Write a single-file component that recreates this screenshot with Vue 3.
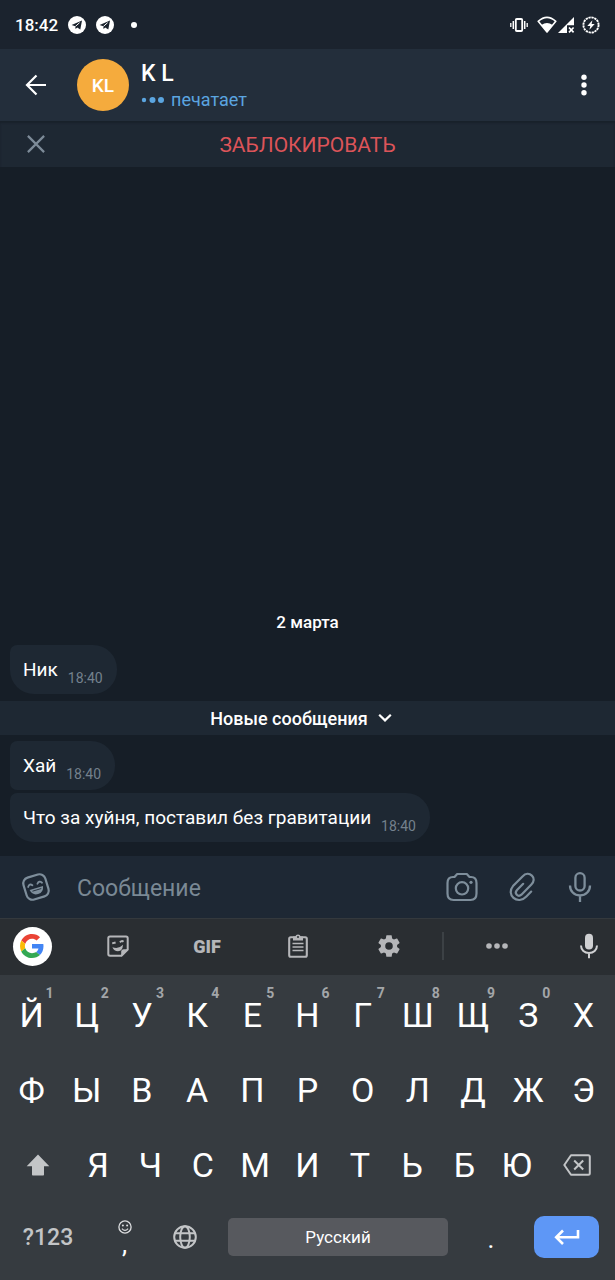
<script setup>
import { ref } from 'vue'

const draft = ref('')
const topRow = [
  ['Й', '1'], ['Ц', '2'], ['У', '3'], ['К', '4'], ['Е', '5'], ['Н', '6'],
  ['Г', '7'], ['Ш', '8'], ['Щ', '9'], ['З', '0'], ['Х', '']
]
const middleRow = [...'ФЫВАПРОЛДЖЭ']
const bottomRow = [...'ЯЧСМИТЬБЮ']
const earlier = [{ text: 'Ник', time: '18:40' }]
const unread = [
  { text: 'Хай', time: '18:40' },
  { text: 'Что за хуйня, поставил без гравитации', time: '18:40' }
]
const type = (c) => { draft.value += c }
const erase = () => { draft.value = draft.value.slice(0, -1) }
</script>

<template>
  <div class="screen">
    <div class="status">
      <span class="clock">18:42</span>
      <svg v-for="n in 2" :key="n" class="tg" width="18" height="18" viewBox="0 0 18 18">
        <circle cx="9" cy="9" r="9" fill="#fff" />
        <path d="M3.6 8.9 14 4.6 12.3 13.6 9.2 11.4 7.6 13 7.2 10.3Z" fill="#1b232e" />
        <path d="M7.4 10.4 11.6 6.7" stroke="#fff" stroke-width="1" />
      </svg>
      <span class="more-dot"></span>
      <span class="grow"></span>
      <svg class="vibrate" width="18" height="14" viewBox="0 0 18 14">
        <rect x="5.8" y="1" width="6.4" height="12" rx="1" fill="none" stroke="#fff" stroke-width="1.8" />
        <path d="M3.3 3v8M14.7 3v8" stroke="#fff" stroke-width="1.5" />
        <path d="M.8 5v4M17.2 5v4" stroke="#fff" stroke-width="1.3" />
      </svg>
      <svg class="wifi" width="20" height="18" viewBox="0 0 20 18">
        <path d="M1.2 5.3Q10-2.7 18.8 5.3L10 16Z" fill="none" stroke="#fff" stroke-width="1.6" stroke-linejoin="round" />
        <path d="M4.4 9Q10 4.8 15.6 9L10 16.5Z" fill="#fff" />
      </svg>
      <svg class="signal" width="17" height="18" viewBox="0 0 17 18">
        <path d="M0 17 16 1V9.3H9V17Z" fill="#fff" />
        <path d="m11 11.5 4.6 4.8m0-4.8L11 16.3" stroke="#fff" stroke-width="1.7" />
      </svg>
      <svg class="battery" width="18" height="18" viewBox="0 0 18 18">
        <circle cx="9" cy="9" r="7.6" fill="none" stroke="#fff" stroke-width="1.9" stroke-dasharray="2.3 .7" />
        <path d="M10.4 4.2 5.3 9.9h3L7.4 13.8 12.7 8H9.6Z" fill="#fff" />
      </svg>
    </div>

    <header class="header">
      <button class="back" aria-label="Назад">
        <svg width="22" height="22" viewBox="0 0 22 22" fill="none" stroke="#fff" stroke-width="2.2">
          <path d="M21 11H2.2M11.5 1.5 2 11l9.5 9.5" />
        </svg>
      </button>
      <div class="avatar">KL</div>
      <div class="who">
        <h1>K L</h1>
        <p>
          <svg width="23" height="8" viewBox="0 0 23 8" fill="currentColor">
            <circle cx="3" cy="4" r="2.2" /><circle cx="11.5" cy="4" r="3" /><circle cx="20" cy="4" r="3" />
          </svg>
          печатает
        </p>
      </div>
      <button class="menu" aria-label="Меню">
        <svg width="6" height="22" viewBox="0 0 6 22" fill="#fff">
          <circle cx="3" cy="3.3" r="2.7" /><circle cx="3" cy="11" r="2.7" /><circle cx="3" cy="18.7" r="2.7" />
        </svg>
      </button>
    </header>

    <div class="blockbar">
      <button class="dismiss" aria-label="Закрыть">
        <svg width="18" height="18" viewBox="0 0 18 18" fill="none" stroke="#7d8b98" stroke-width="2.2">
          <path d="m.9.9 16.2 16.2M17.1.9.9 17.1" />
        </svg>
      </button>
      <button class="block">ЗАБЛОКИРОВАТЬ</button>
    </div>

    <main class="chat">
      <div class="date">2 марта</div>
      <div v-for="m in earlier" :key="m.text" class="bubble single">
        <span>{{ m.text }}</span><time>{{ m.time }}</time>
      </div>
      <div class="unread">
        Новые сообщения
        <svg width="14" height="10" viewBox="0 0 14 10" fill="none" stroke="#fff" stroke-width="2.2">
          <path d="m1.2 1.8 5.8 5.6 5.8-5.6" />
        </svg>
      </div>
      <div v-for="m in unread" :key="m.text" class="bubble">
        <span>{{ m.text }}</span><time>{{ m.time }}</time>
      </div>
    </main>

    <form class="composer" @submit.prevent>
      <button type="button" class="emoji" aria-label="Стикеры">
        <svg width="30" height="30" viewBox="0 0 30 30">
          <g transform="rotate(-17 15 15)">
            <rect x="3.6" y="3.6" width="22.8" height="22.8" rx="6" fill="none" stroke="#7e8e9b" stroke-width="2.2" />
            <path d="M7.5 12.7Q9.8 9.4 12.1 12.3M17.3 12.3Q19.8 9.4 22 12.7" fill="none" stroke="#7e8e9b" stroke-width="1.8" stroke-linecap="round" />
            <path d="M8 16.1H22Q20.8 22.4 15 22.4T8 16.1Z" fill="#7e8e9b" />
            <path d="M10.4 18H19.6" stroke="#1d2733" stroke-width=".8" />
          </g>
        </svg>
      </button>
      <input v-model="draft" type="text" placeholder="Сообщение" aria-label="Сообщение">
      <button type="button" class="camera" aria-label="Камера">
        <svg width="32" height="30" viewBox="0 0 32 30" fill="none" stroke="#7e8e9b" stroke-width="2.2">
          <path d="M11.2 2H20.8L23.5 5H25Q30.5 5 30.5 11V21.5Q30.5 28 24.5 28H7.5Q1.5 28 1.5 21.5V11Q1.5 5 7 5H8.5Z" stroke-linejoin="round" />
          <circle cx="16" cy="16.3" r="6.2" /><circle cx="25" cy="10.3" r="1.6" fill="#7e8e9b" stroke="none" />
        </svg>
      </button>
      <button type="button" class="clip" aria-label="Прикрепить">
        <svg width="26" height="30" viewBox="0 0 26 30" fill="none" stroke="#7e8e9b" stroke-width="2.2" stroke-linecap="round">
          <path d="M22.2 19.6 17.4 24.5C13.4 28.8 7.9 29 4.5 25.9S.6 18 4 14.1L13.5 4.4C16.6 1.2 20.3 1.1 22.9 3.6S25.2 9.6 22.4 12.5L12.4 22.7C9.1 25.6 4.8 21.5 8 18.1L14.2 11.8" />
        </svg>
      </button>
      <button type="button" class="voice" aria-label="Голосовое сообщение">
        <svg width="24" height="32" viewBox="0 0 24 32" fill="none" stroke="#7e8e9b" stroke-width="2.3">
          <rect x="7.4" y="2.1" width="9.2" height="17.4" rx="4.6" />
          <path d="M2 14.5C2 20 6 24.5 12 24.5S22 20 22 14.5M12 24.5V31" />
        </svg>
      </button>
    </form>

    <div class="toolbar">
      <button class="google" aria-label="Google">
        <svg width="24" height="24" viewBox="0 0 48 48">
          <path fill="#ea4335" d="M24 9.5c3.54 0 6.71 1.22 9.21 3.6l6.85-6.85C35.9 2.38 30.47 0 24 0 14.62 0 6.51 5.38 2.56 13.22l7.98 6.19C12.43 13.72 17.74 9.5 24 9.5z" />
          <path fill="#4285f4" d="M46.98 24.55c0-1.57-.15-3.09-.38-4.55H24v9.02h12.94c-.58 2.96-2.26 5.48-4.78 7.18l7.73 6c4.51-4.18 7.09-10.36 7.09-17.65z" />
          <path fill="#fbbc05" d="M10.53 28.59A14.5 14.5 0 0 1 9.77 24c0-1.6.27-3.14.76-4.59l-7.98-6.19A23.9 23.9 0 0 0 0 24c0 3.88.92 7.54 2.56 10.78z" />
          <path fill="#34a853" d="M24 48c6.48 0 11.93-2.13 15.89-5.81l-7.73-6c-2.15 1.45-4.92 2.3-8.16 2.3-6.26 0-11.57-4.22-13.47-9.91l-7.98 6.19C6.51 42.62 14.62 48 24 48z" />
        </svg>
      </button>
      <button aria-label="Наклейки">
        <svg width="24" height="24" viewBox="0 0 24 24">
          <path d="M4 2.4H20Q21.7 2.4 21.7 4V15.5L15.5 21.7H4Q2.3 21.7 2.3 20V4Q2.3 2.4 4 2.4Z" fill="none" stroke="#b5b6b9" stroke-width="2" />
          <path d="M15.2 22.4V17.8Q15.2 15.2 17.8 15.2H22.4Z" fill="#b5b6b9" />
          <path d="m6.2 9.4 3.4-.9M14 8.4Q15.6 6.2 17.5 7.7" fill="none" stroke="#b5b6b9" stroke-width="2" />
          <path d="M6.4 13.2Q12.8 15.4 17 10.8 16.6 17.2 12 17.3 8 17.2 6.4 13.2Z" fill="#b5b6b9" />
        </svg>
      </button>
      <button class="gif">GIF</button>
      <button aria-label="Буфер обмена">
        <svg width="22" height="26" viewBox="0 0 22 26">
          <rect x="2.2" y="4.2" width="17.6" height="19.6" rx="1.5" fill="none" stroke="#b5b6b9" stroke-width="2.1" />
          <path d="M6 7.6V3.5H8.3A2.8 2.8 0 0 1 13.7 3.5H16V7.6Z" fill="#b5b6b9" />
          <circle cx="11" cy="4" r="1" fill="#2a2e32" />
          <path d="M5.5 10.5h11M5.5 14h11M5.5 17.5h11" stroke="#b5b6b9" stroke-width="1.5" />
        </svg>
      </button>
      <button aria-label="Настройки">
        <svg width="26" height="26" viewBox="0 0 24 24" fill="#b5b6b9">
          <path d="M19.43 12.98c.04-.32.07-.64.07-.98s-.03-.66-.07-.98l2.11-1.65c.19-.15.24-.42.12-.64l-2-3.46c-.12-.22-.39-.3-.61-.22l-2.49 1c-.52-.4-1.08-.73-1.69-.98l-.38-2.65A.49.49 0 0 0 14 2h-4c-.25 0-.46.18-.49.42l-.38 2.65c-.61.25-1.17.59-1.69.98l-2.49-1c-.23-.09-.49 0-.61.22l-2 3.46c-.13.22-.07.49.12.64l2.11 1.65c-.04.32-.07.65-.07.98s.03.66.07.98l-2.11 1.65c-.19.15-.24.42-.12.64l2 3.46c.12.22.39.3.61.22l2.49-1c.52.4 1.08.73 1.69.98l.38 2.65c.03.24.24.42.49.42h4c.25 0 .46-.18.49-.42l.38-2.65c.61-.25 1.17-.59 1.69-.98l2.49 1c.23.09.49 0 .61-.22l2-3.46c.12-.22.07-.49-.12-.64zM12 15.5a3.5 3.5 0 1 1 0-7 3.5 3.5 0 0 1 0 7z" />
        </svg>
      </button>
      <span class="rule"></span>
      <button aria-label="Ещё">
        <svg width="22" height="6" viewBox="0 0 22 6" fill="#b5b6b9">
          <circle cx="3" cy="3" r="2.8" /><circle cx="11" cy="3" r="2.8" /><circle cx="19" cy="3" r="2.8" />
        </svg>
      </button>
      <button class="dictate" aria-label="Голосовой ввод">
        <svg width="20" height="26" viewBox="0 0 20 26">
          <rect x="6" y=".8" width="8" height="15.6" rx="4" fill="#cfd0d2" />
          <path d="M2 12.5C2 17 5.5 20 10 20S18 17 18 12.5M10 20V25.3" fill="none" stroke="#cfd0d2" stroke-width="2" />
        </svg>
      </button>
    </div>

    <div class="keyboard">
      <div class="row wide">
        <button v-for="[c, n] in topRow" :key="c" class="key" @click="type(c)">{{ c }}<sup v-if="n">{{ n }}</sup></button>
      </div>
      <div class="row wide">
        <button v-for="c in middleRow" :key="c" class="key" @click="type(c)">{{ c }}</button>
      </div>
      <div class="row narrow">
        <button class="key" aria-label="Shift">
          <svg width="24" height="22" viewBox="0 0 24 22"><path d="M12 .5 23.3 12.3H18V20.8Q18 21.6 17.2 21.6H6.8Q6 21.6 6 20.8V12.3H.7Z" fill="#c3c5c7" /></svg>
        </button>
        <button v-for="c in bottomRow" :key="c" class="key" @click="type(c)">{{ c }}</button>
        <button class="key" aria-label="Удалить" @click="erase">
          <svg width="28" height="22" viewBox="0 0 28 22" fill="none" stroke="#c3c5c7" stroke-width="2">
            <path d="M8 1.2H25.3Q26.8 1.2 26.8 2.7V19.3Q26.8 20.8 25.3 20.8H8L1.3 11Z" stroke-linejoin="round" />
            <path d="m11.2 6.5 9 9m0-9-9 9" />
          </svg>
        </button>
      </div>
      <div class="row last">
        <button class="symbols">?123</button>
        <button class="comma" @click="type(',')">
          <svg width="14" height="14" viewBox="0 0 14 14">
            <circle cx="7" cy="7" r="6.1" fill="none" stroke="#dcdddf" stroke-width="1.3" />
            <circle cx="4.9" cy="5.6" r="1" fill="#dcdddf" /><circle cx="9.1" cy="5.6" r="1" fill="#dcdddf" />
            <path d="M3.9 8.6Q7 12 10.1 8.6" fill="none" stroke="#dcdddf" stroke-width="1.2" />
          </svg>
          <span>,</span>
        </button>
        <button aria-label="Язык">
          <svg width="24" height="24" viewBox="0 0 24 24" fill="none" stroke="#c3c5c7" stroke-width="2">
            <circle cx="12" cy="12" r="10.8" /><ellipse cx="12" cy="12" rx="4.8" ry="10.8" />
            <path d="M2 8.2H22M2 15.8H22" />
          </svg>
        </button>
        <button class="space" @click="type(' ')">Русский</button>
        <button class="dot" @click="type('.')">.</button>
        <button class="enter" aria-label="Ввод">
          <svg width="26" height="16" viewBox="0 0 26 16" fill="none" stroke="#fff" stroke-width="2.6">
            <path d="M24 1V8.3H2.5M9 1.5 2.2 8.3 9 15" />
          </svg>
        </button>
      </div>
    </div>
  </div>
</template>

<style>
body { background: #161e27; }
</style>

<style scoped>
.screen {
  display: flex;
  flex-direction: column;
  min-height: 100vh;
  background: #161e27;
  color: #fff;
  font-family: Roboto, "Noto Sans", sans-serif;
}
button {
  display: flex;
  align-items: center;
  justify-content: center;
  margin: 0;
  padding: 0;
  border: 0;
  background: none;
  color: inherit;
  font: inherit;
  cursor: pointer;
}
svg { display: block; flex: none; }
.grow { flex: 1; }

.status {
  display: flex;
  align-items: center;
  height: 49px;
  padding: 0 15px 0 15px;
  background: #1b232e;
}
.clock { margin-right: 10px; font-size: 17px; line-height: 20px; font-weight: 500; }
.tg { margin-right: 10px; }
.more-dot { width: 6px; height: 6px; margin-left: 7px; border-radius: 50%; background: #fff; }
.wifi { margin-left: 9px; }
.signal { margin-left: 1px; }
.battery { margin-left: 7px; }

.header {
  display: flex;
  align-items: center;
  height: 72px;
  padding: 0 19px 0 16px;
  background: #232e3b;
}
.back { width: 40px; height: 40px; margin-right: 21px; }
.avatar {
  display: flex;
  align-items: center;
  justify-content: center;
  width: 52px;
  height: 52px;
  margin-right: 12px;
  border-radius: 50%;
  background: #f5ab3d;
  font-size: 19px;
  font-weight: 500;
}
.who { flex: 1; }
.who h1 { margin: 0; padding-top: 2px; font-size: 23px; line-height: 28px; font-weight: 500; }
.who p {
  display: flex;
  align-items: center;
  gap: 7px;
  margin: 0;
  color: #5ba5e0;
  font-size: 18px;
  line-height: 24px;
}
.menu { width: 24px; height: 40px; }

.blockbar {
  display: grid;
  grid-template-columns: 72px 1fr 72px;
  height: 46px;
  background: #1e2833;
  box-shadow: inset 0 2px 2px #19212b;
}
.block { padding-top: 2px; color: #dc5459; font-size: 21px; }

.chat {
  display: flex;
  flex: 1;
  flex-direction: column;
  align-items: flex-start;
  justify-content: flex-end;
  padding-bottom: 14px;
}
.date {
  align-self: center;
  margin-bottom: 11px;
  font-size: 17px;
  line-height: 24px;
  font-weight: 500;
}
.bubble {
  display: flex;
  align-items: center;
  gap: 10px;
  height: 49px;
  margin-left: 10px;
  padding: 0 14px 0 13px;
  border-radius: 7px 24px 24px 24px;
  background: #1e2833;
  font-size: 19px;
}
.bubble + .bubble { margin-top: 3px; }
.unread + .bubble { border-radius: 7px 24px 24px 7px; }
.bubble time { padding-top: 17px; color: #74818d; font-size: 14px; line-height: 16px; }
.unread {
  display: flex;
  align-items: center;
  align-self: stretch;
  justify-content: center;
  gap: 10px;
  height: 34px;
  margin: 7px 0 6px;
  padding-right: 13px;
  background: #1e2833;
  font-size: 18px;
  font-weight: 500;
}

.composer {
  display: flex;
  align-items: center;
  height: 62px;
  background: #1e2834;
}
.composer button { height: 48px; }
.emoji { width: 72px; }
.composer input {
  flex: 1;
  min-width: 0;
  height: 48px;
  padding: 2px 5px 0;
  border: 0;
  outline: 0;
  background: none;
  color: #fff;
  font: 23px Roboto, "Noto Sans", sans-serif;
}
.composer input::placeholder { color: #7a8995; opacity: 1; }
.camera { width: 60px; }
.clip { width: 60px; }
.voice { width: 56px; margin-right: 7px; }

.toolbar {
  display: grid;
  grid-template-columns: 64px 107px 72px 110px 72px 36px 72px 1fr;
  align-items: center;
  height: 57px;
  padding-bottom: 2px;
  box-sizing: border-box;
  border-top: 1px solid #34393d;
  background: #2a2e32;
}
.toolbar button { height: 48px; }
.toolbar .google {
  justify-self: center;
  width: 39px;
  height: 39px;
  border-radius: 50%;
  background: #fff;
}
.gif { color: #b5b6b9; font-size: 18px; font-weight: 900; }
.rule { justify-self: center; width: 2px; height: 28px; background: #3c4145; }
.toolbar .dictate { justify-self: end; width: 52px; }

.keyboard { padding: 1px 4px 7px; background: #363b40; }
.row { display: grid; height: 75px; }
.wide { grid-template-columns: repeat(11, 1fr); }
.narrow { grid-template-columns: 68px repeat(9, 1fr) 68px; }
.key { position: relative; min-width: 0; padding-top: 2px; font-size: 34px; line-height: 40px; }
.key sup {
  position: absolute;
  top: 9px;
  left: calc(50% + 14px);
  color: #a3a6a9;
  font-size: 14px;
  line-height: 16px;
  font-weight: 700;
}
.last {
  grid-template-columns: 88px 65px 56px 1fr 86px 65px;
  align-items: center;
  height: 72px;
  padding-right: 12px;
}
.symbols { color: #c3c5c7; font-size: 23px; font-weight: 500; }
.comma { flex-direction: column; font-size: 26px; line-height: 20px; }
.space {
  height: 38px;
  margin-left: 15px;
  border-radius: 5px;
  background: #57595e;
  font-size: 17px;
}
.dot { padding-top: 3px; font-size: 26px; line-height: 30px; }
.enter { height: 42px; border-radius: 10px; background: #5e97f6; }
</style>
